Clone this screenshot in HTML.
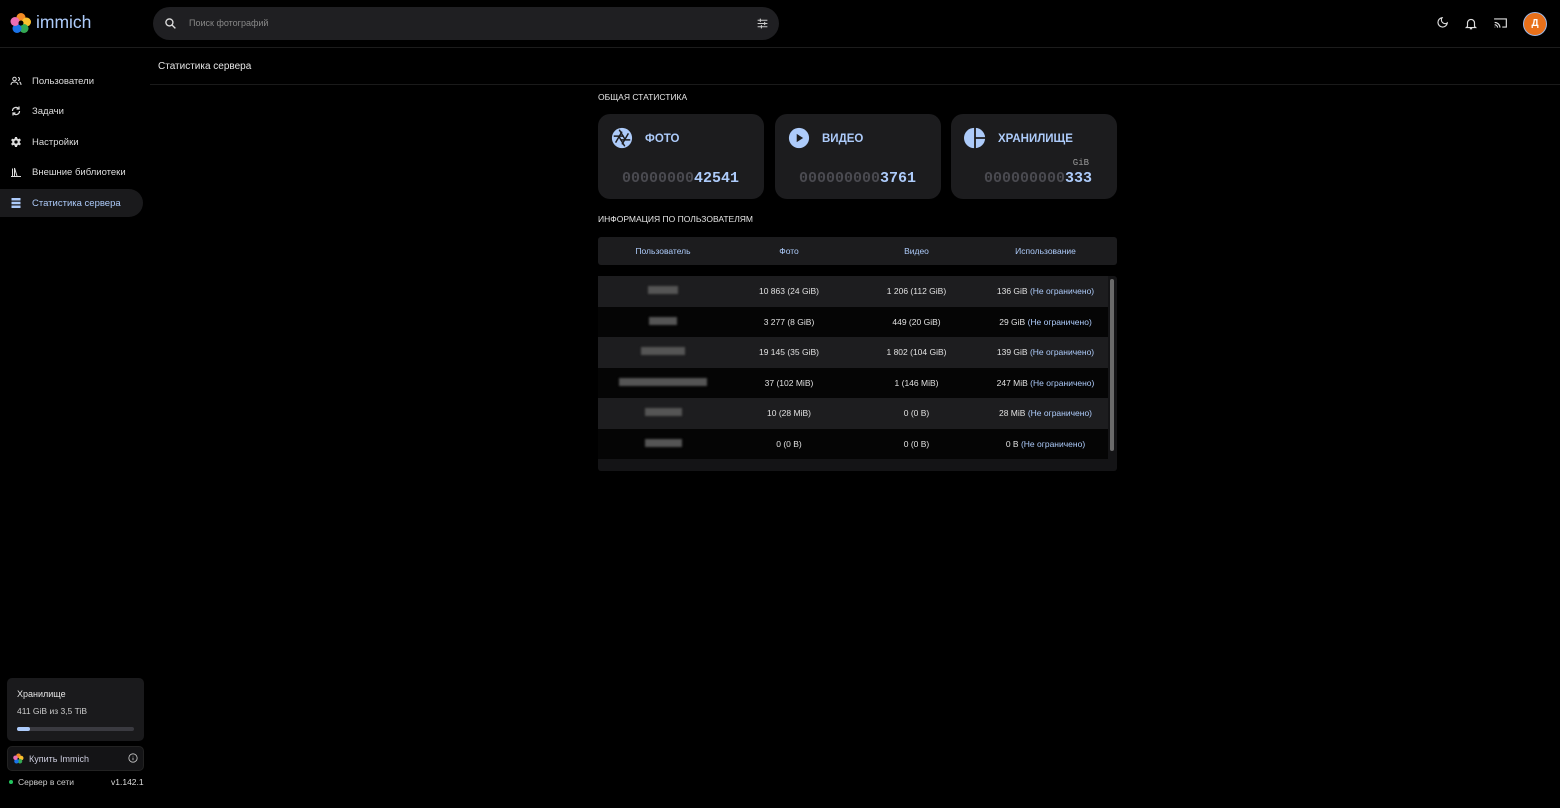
<!DOCTYPE html>
<html><head><meta charset="utf-8"><style>
*{box-sizing:border-box;margin:0;padding:0}
body{width:1560px;height:808px;background:#000;color:#e6e6e6;font-family:"Liberation Sans","Noto Sans CJK SC",sans-serif;position:relative;overflow:hidden;font-size:9px}
.abs{position:absolute}
.hdr{left:0;top:0;width:1560px;height:48px;border-bottom:1px solid #1c1c1c}
.search{left:153px;top:7px;width:626px;height:33px;border-radius:17px;background:#1f1f22}
.nav{left:0;width:143px;height:28px;display:flex;align-items:center;padding-left:10px;font-size:9.5px;color:#ddd}
.nav svg{width:12px;height:12px;margin-right:10px}
.card{width:166px;height:85px;background:#1c1c1e;border-radius:12px;top:114px}
.card .t{position:absolute;left:47px;top:18px;font-weight:bold;font-size:11.5px;color:#adcbfa}
.card .n{position:absolute;right:25px;top:56px;font-family:"Liberation Mono",monospace;font-size:15px;font-weight:bold;color:#4a4a50}
.card .n b{color:#adcbfa}
.card svg{position:absolute;left:13px;top:13px;width:22px;height:22px}
.row{position:absolute;left:598px;width:510px;height:30.5px;display:flex;align-items:center;font-size:8.5px;color:#e0e0e0}
.row div{text-align:center}
.c1{width:130px}.c2{width:122px}.c3{width:133px}.c4{width:125px}
.bl{color:#adcbfa}
.blur{display:inline-block;height:8px;background:#555;filter:blur(1px)}
</style></head><body>
<div class="abs hdr"></div>
<svg class="abs" style="left:10px;top:12px" width="22" height="22" viewBox="0 0 22 22">
<circle cx="11" cy="5.5" r="4.5" fill="#f28b24"/><circle cx="16.5" cy="10" r="4.5" fill="#fbc02d"/><circle cx="14" cy="16.5" r="4.5" fill="#34a853"/><circle cx="7" cy="16.5" r="4.5" fill="#1a73e8"/><circle cx="5" cy="9.5" r="4.5" fill="#ea6fb4"/><circle cx="11" cy="11" r="2.5" fill="#000"/></svg>
<div class="abs" style="left:36px;top:12px;font-size:17.5px;color:#adcbfa">immich</div>
<div class="abs search"></div>
<svg class="abs" style="left:164px;top:17px" width="13" height="13" viewBox="0 0 24 24" fill="none" stroke="#ddd" stroke-width="2.5"><circle cx="10" cy="10" r="6.5"/><path d="M15 15l6 6"/></svg>
<div class="abs" style="left:189px;top:18px;font-size:9px;color:#888">Поиск фотографий</div>
<svg class="abs" style="left:756px;top:17px" width="13" height="13" viewBox="0 0 24 24" stroke="#ccc" stroke-width="2"><path d="M3 6h18M3 12h18M3 18h18"/><path d="M8 3v6M16 9v6M10 15v6" /></svg>
<svg class="abs" style="left:1435px;top:16px" width="14" height="14" viewBox="0 0 24 24" fill="none" stroke="#ddd" stroke-width="2"><path d="M12 3a8 8 0 1 0 9 9 6.5 6.5 0 0 1-9-9z"/></svg>
<svg class="abs" style="left:1464px;top:16px" width="14" height="15" viewBox="0 0 24 24" fill="none" stroke="#ddd" stroke-width="2"><path d="M6 17V11a6 6 0 0 1 12 0v6l2 2H4z M10 21h4"/></svg>
<svg class="abs" style="left:1493px;top:16px" width="15" height="14" viewBox="0 0 24 24" fill="none" stroke="#ddd" stroke-width="2"><path d="M2 6V5h20v14h-7M2 11a9 9 0 0 1 9 9M2 15a5 5 0 0 1 5 5M2 19h1"/></svg>
<div class="abs" style="left:1523px;top:12px;width:24px;height:24px;border-radius:50%;background:#e8701a;border:1px solid #9bb7e6;color:#fff;font-size:10px;text-align:center;line-height:22px;font-weight:bold">Д</div>

<div class="abs nav" style="top:67px"><svg viewBox="0 0 24 24" fill="none" stroke="#ddd" stroke-width="2"><circle cx="9" cy="8" r="3.5"/><path d="M2 20c0-4 3-6 7-6s7 2 7 6M16 5a3 3 0 0 1 0 6M19 14c2 1 3 3 3 6"/></svg>Пользователи</div>
<div class="abs nav" style="top:97px"><svg viewBox="0 0 24 24" fill="none" stroke="#ddd" stroke-width="2.5"><path d="M5 12a7 7 0 0 1 12-5l1 1M19 12a7 7 0 0 1-12 5l-1-1M18 3v5h-5M6 21v-5h5"/></svg>Задачи</div>
<div class="abs nav" style="top:128px"><svg viewBox="0 0 24 24"><path fill="#ddd" d="M10 2h4l.6 3 2.4 1.3 2.8-1.2 2 3.4-2.3 2v2.9l2.3 2-2 3.4-2.8-1.2L14.6 19 14 22h-4l-.6-3-2.4-1.3-2.8 1.2-2-3.4 2.3-2v-2.9l-2.3-2 2-3.4 2.8 1.2L9.4 5z"/><circle cx="12" cy="12" r="3.3" fill="#000"/></svg>Настройки</div>
<div class="abs nav" style="top:158px"><svg viewBox="0 0 24 24" fill="none" stroke="#ddd" stroke-width="2"><path d="M5 20V5M9 20V4l5 16M2 21h20"/></svg>Внешние библиотеки</div>
<div class="abs nav" style="top:189px;background:#1a1a1c;border-radius:0 14px 14px 0;color:#adcbfa"><svg viewBox="0 0 24 24" fill="#adcbfa"><rect x="3" y="2" width="18" height="5"/><rect x="3" y="9.5" width="18" height="5"/><rect x="3" y="17" width="18" height="5"/></svg>Статистика сервера</div>

<div class="abs" style="left:158px;top:61px;font-size:10px;color:#e6e6e6">Статистика сервера</div>
<div class="abs" style="left:150px;top:84px;width:1410px;height:1px;background:#1a1a1a"></div>

<div class="abs" style="left:598px;top:92px;font-size:8.5px">ОБЩАЯ СТАТИСТИКА</div>
<div class="abs card" style="left:598px"><svg viewBox="0 0 24 24"><circle cx="12" cy="12" r="11" fill="#adcbfa"/><g stroke="#1c1c1e" stroke-width="1.6"><path d="M9 3l6 10M19 7l-7 12M21 14H10M15 21L9 11M5 17l7-12M3 10h11"/></g></svg><div class="t" style="top:19px">ФОТО</div><div class="n">00000000<b>42541</b></div></div>
<div class="abs card" style="left:775px"><svg viewBox="0 0 24 24"><circle cx="12" cy="12" r="11" fill="#adcbfa"/><path d="M9.5 7.5v9l7-4.5z" fill="#1c1c1e"/></svg><div class="t" style="top:19px">ВИДЕО</div><div class="n">000000000<b>3761</b></div></div>
<div class="abs card" style="left:951px"><svg viewBox="0 0 24 24"><path d="M11 1A11 11 0 0 0 11 23z" fill="#adcbfa"/><path d="M13 1a11 11 0 0 1 10 10H13z" fill="#adcbfa"/><path d="M13 13h10a11 11 0 0 1-10 10z" fill="#adcbfa"/></svg><div class="t" style="top:19px">ХРАНИЛИЩЕ</div><div style="position:absolute;right:28px;top:44px;font-family:'Liberation Mono',monospace;font-size:9px;color:#999">GiB</div><div class="n">000000000<b>333</b></div></div>

<div class="abs" style="left:598px;top:214px;font-size:8.5px">ИНФОРМАЦИЯ ПО ПОЛЬЗОВАТЕЛЯМ</div>
<div class="abs" style="left:598px;top:237px;width:519px;height:28px;background:#1c1c1e;border-radius:3px"></div>
<div class="row" style="top:236px;color:#adcbfa"><div class="c1">Пользователь</div><div class="c2">Фото</div><div class="c3">Видео</div><div class="c4">Использование</div></div>
<div class="abs" style="left:598px;top:276px;width:519px;height:195px;background:#141416;border-radius:3px"></div>
<div class="abs" style="left:1110px;top:279px;width:4px;height:172px;background:#6a6a6a;border-radius:2px"></div>

<div class="row" style="top:276px;background:#1d1d1f"><div class="c1"><span class="blur" style="width:30px"></span></div><div class="c2">10 863 (24 GiB)</div><div class="c3">1 206 (112 GiB)</div><div class="c4">136 GiB <span class="bl">(Не ограничено)</span></div></div>
<div class="row" style="top:306.5px;background:#050505"><div class="c1"><span class="blur" style="width:28px"></span></div><div class="c2">3 277 (8 GiB)</div><div class="c3">449 (20 GiB)</div><div class="c4">29 GiB <span class="bl">(Не ограничено)</span></div></div>
<div class="row" style="top:337px;background:#1d1d1f"><div class="c1"><span class="blur" style="width:44px"></span></div><div class="c2">19 145 (35 GiB)</div><div class="c3">1 802 (104 GiB)</div><div class="c4">139 GiB <span class="bl">(Не ограничено)</span></div></div>
<div class="row" style="top:367.5px;background:#050505"><div class="c1"><span class="blur" style="width:88px"></span></div><div class="c2">37 (102 MiB)</div><div class="c3">1 (146 MiB)</div><div class="c4">247 MiB <span class="bl">(Не ограничено)</span></div></div>
<div class="row" style="top:398px;background:#1d1d1f"><div class="c1"><span class="blur" style="width:37px"></span></div><div class="c2">10 (28 MiB)</div><div class="c3">0 (0 B)</div><div class="c4">28 MiB <span class="bl">(Не ограничено)</span></div></div>
<div class="row" style="top:428.5px;background:#050505"><div class="c1"><span class="blur" style="width:37px"></span></div><div class="c2">0 (0 B)</div><div class="c3">0 (0 B)</div><div class="c4">0 B <span class="bl">(Не ограничено)</span></div></div>

<div class="abs" style="left:7px;top:678px;width:137px;height:63px;background:#1a1a1c;border-radius:5px"></div>
<div class="abs" style="left:17px;top:689px;font-size:9px">Хранилище</div>
<div class="abs" style="left:17px;top:706px;font-size:8.5px;color:#ccc">411 GiB из 3,5 TiB</div>
<div class="abs" style="left:17px;top:727px;width:117px;height:4px;background:#3a3a40;border-radius:2px"><div style="width:13px;height:4px;background:#adcbfa;border-radius:2px"></div></div>
<div class="abs" style="left:7px;top:746px;width:137px;height:25px;background:#141416;border:1px solid #222;border-radius:5px"></div>
<svg class="abs" style="left:13px;top:753px" width="11" height="11" viewBox="0 0 22 22"><circle cx="11" cy="5.5" r="4.5" fill="#f28b24"/><circle cx="16.5" cy="10" r="4.5" fill="#fbc02d"/><circle cx="14" cy="16.5" r="4.5" fill="#34a853"/><circle cx="7" cy="16.5" r="4.5" fill="#1a73e8"/><circle cx="5" cy="9.5" r="4.5" fill="#ea6fb4"/></svg>
<div class="abs" style="left:29px;top:754px;font-size:9px;color:#ccd">Купить Immich</div>
<svg class="abs" style="left:128px;top:753px" width="10" height="10" viewBox="0 0 24 24" fill="none" stroke="#ccc" stroke-width="2"><circle cx="12" cy="12" r="10"/><path d="M12 11v6M12 7v1"/></svg>
<div class="abs" style="left:9px;top:780px;width:4px;height:4px;border-radius:50%;background:#22c55e"></div>
<div class="abs" style="left:18px;top:777px;font-size:8.5px;color:#ccc">Сервер в сети</div>
<div class="abs" style="left:111px;top:777px;font-size:8.5px;color:#ddd">v1.142.1</div>
</body></html>
